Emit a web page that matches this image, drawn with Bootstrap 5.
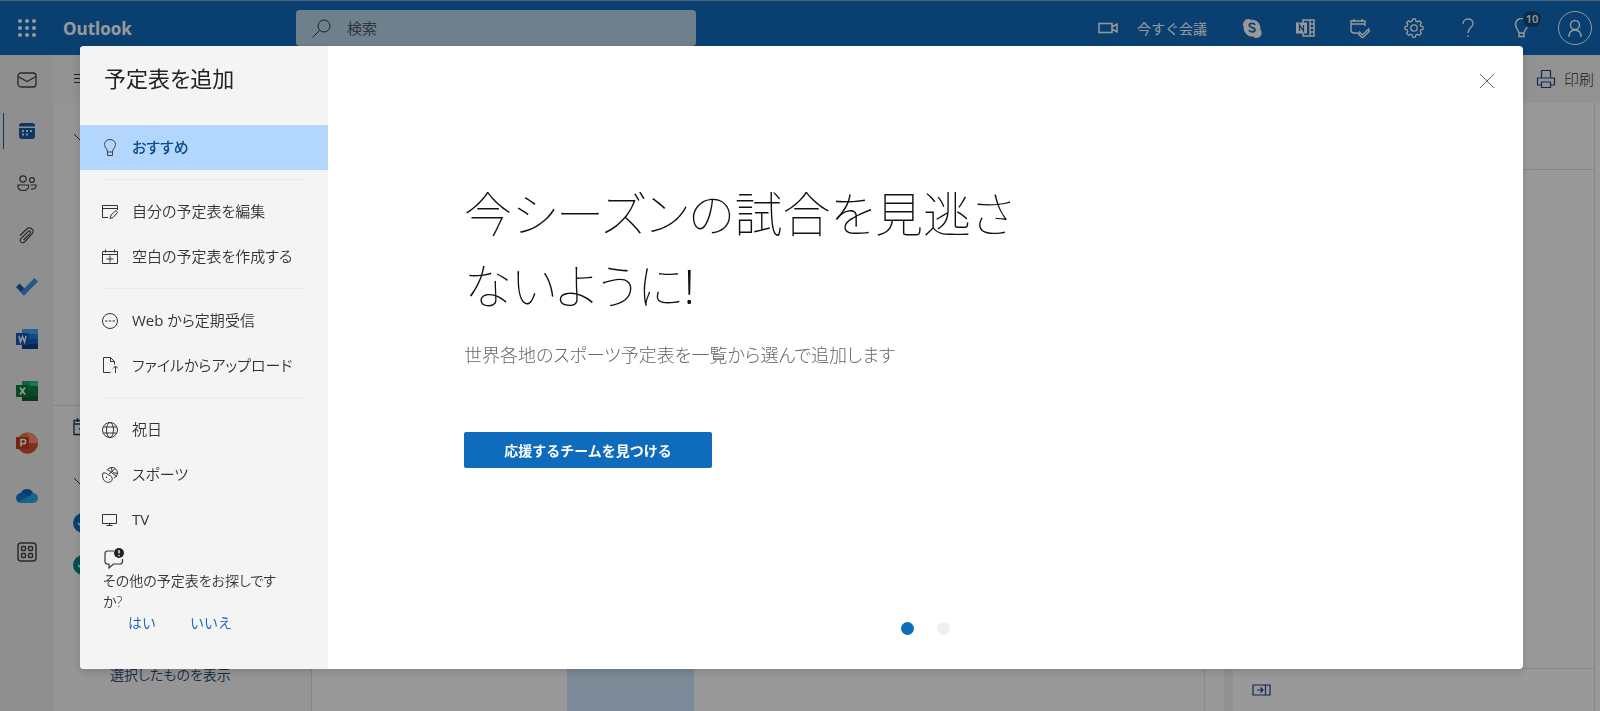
<!DOCTYPE html>
<html lang="ja">
<head>
<meta charset="utf-8">
<meta name="viewport" content="width=device-width, initial-scale=1">
<title>Outlook - 予定表を追加</title>
<link rel="stylesheet" href="https://cdn.jsdelivr.net/npm/bootstrap@5.3.0/dist/css/bootstrap.min.css">
<style>
  body { font-family: "Open Sans", "Noto Sans CJK JP", sans-serif; font-feature-settings: "palt"; font-size: 15px; line-height: 21px; color: #333; background: #f3f3f3; }
  svg { display: block; fill: none; stroke: currentColor; stroke-width: 1; flex-shrink: 0; }
  .btn { --bs-btn-border-width: 0; --bs-btn-padding-x: 0; --bs-btn-padding-y: 0; --bs-btn-border-radius: 0; --bs-btn-font-size: 15px; --bs-btn-line-height: 21px; }

  .suite-bar { height: 55px; background: #0f6cbd; border-top: 1px solid #78a5cb; color: #fff; }
  .suite-bar .btn, .suite-bar a { color: #fff; }
  .waffle { width: 53px; }
  .brand-area { width: 296px; }
  .brand-name { font-size: 17px; font-weight: 700; margin-left: 10px; }
  .search-box { width: 400px; height: 36px; background: #b9d5eb; border-radius: 4px; color: #333; }
  .search-box input { font-size: 15px; }
  .search-box input::placeholder { color: #4c5a66; opacity: 1; }
  .bar-btn { width: 54px; height: 54px; }
  .meet-btn { --bs-btn-font-size: 14px; margin-right: 18px; gap: 19px; }
  .tips-count { left: 28px; top: 10px; width: 18px; height: 16px; border-radius: 8px; background: #15497a; font-size: 11px; font-weight: 600; line-height: 16px; }
  .avatar { width: 51px; }
  .avatar span { width: 34px; height: 34px; border: 1px solid #fff; }

  .app-rail { width: 53px; background: #eee; color: #444; }
  .app-rail a { height: 52px; width: 53px; color: inherit; }
  .app-rail a:first-child { height: 50px; }
  .app-rail a.current { color: #0f5cab; }
  .current::before { content: ""; position: absolute; left: 3px; top: 8px; width: 1px; height: 36px; background: #0f5cab; }
  .app-rail a.more-apps { height: 62px; }

  .command-bar { height: 48px; padding: 0 6px 0 20px; }
  .command-bar .btn { color: #333; font-weight: 300; }
  .folder-pane { width: 259px; background: #f8f8f8; border-right: 1px solid #e2e2e2; }
  .pane-row { height: 42px; padding-left: 20px; }
  .mini-month { height: 303px; border-bottom: 1px solid #ddd; padding-top: 13px; }
  .pane-gap { margin-top: 12px; }
  .pane-link { margin-top: 78px; padding-left: 57px; font-size: 14px; font-weight: 350; }
  .pane-link a { color: #2b4a70; }
  .surface { background: #fff; }
  .days { display: grid; grid-template-columns: repeat(7, 1fr); border-right: 1px solid #e5e5e5; margin-right: 19px; }
  .today { background: #cde6fb; }
  .agenda { width: 371px; border-left: 9px solid #f2f2f2; border-right: 1px solid #e2e2e2; margin-right: 5px; }
  .agenda-head { height: 67px; border-bottom: 1px solid #e2e2e2; }
  .agenda-body { border-bottom: 1px solid #e2e2e2; }
  .agenda-foot { height: 42px; padding-left: 19px; color: #1b3f8b; }

  .veil { background: rgba(0, 0, 0, .4); }
  .veil .modal-dialog { max-width: none; margin: 46px 77px 42px 80px; }
  .veil .modal-content { min-height: calc(100vh - 88px); border: 0; border-radius: 4px; overflow: hidden; color: #333; box-shadow: 0 3px 8px rgba(0, 0, 0, .15); }
  .side { width: 248px; background: #f4f4f4; padding-bottom: 34px; font-weight: 350; }
  .side h1 { font-size: 22px; line-height: 32px; font-weight: 400; color: #222; margin: 16px 24px 31px; }
  .side-link { height: 45px; padding-left: 22px; gap: 14px; color: #333; }
  .side-link.chosen { background: #b3d6fc; color: #0f4a8a; font-weight: 500; }
  .side-link.chosen svg { color: #444; }
  .side hr { margin: 9px 23px; border-color: #d0d0d0; }
  .ask { padding: 6px 23px 0; font-size: 14px; }
  .ask-text { max-width: 184px; }
  .ask .btn { --bs-btn-font-size: 14px; color: #1160b7; font-weight: 350; }
  .ask-answers { padding-left: 25px; gap: 34px; }
  .promo { padding: 132px 0 0 136px; }
  .promo h2 { font-size: 48px; line-height: 72px; font-weight: 100; color: #111; max-width: 570px; margin: 0; }
  .promo p { font-size: 18px; line-height: 26px; font-weight: 300; color: #666; margin: 20px 0 64px; }
  .cta.btn { --bs-btn-font-size: 14px; width: 248px; height: 36px; border-radius: 2px; background: #0f6cbd; color: #fff; font-weight: 700; }
  .close-btn { right: 28px; top: 27px; color: #666; }
  .dots { gap: 23px; margin-bottom: 34px; }
  .dots .btn { width: 13px; height: 13px; border-radius: 50%; background: #f0f0f0; }
  .dots .btn.active { background: #0f6cbd; }
</style>
</head>
<body class="vh-100 d-flex flex-column overflow-hidden">

<header class="suite-bar d-flex align-items-center flex-shrink-0">
  <div class="brand-area d-flex align-items-center">
    <button class="btn waffle d-flex justify-content-center" aria-label="アプリ起動ツール">
      <svg width="20" height="20" viewBox="0 0 20 20" style="fill:currentColor;stroke:none"><circle cx="3" cy="3" r="2"/><circle cx="10" cy="3" r="2"/><circle cx="17" cy="3" r="2"/><circle cx="3" cy="10" r="2"/><circle cx="10" cy="10" r="2"/><circle cx="17" cy="10" r="2"/><circle cx="3" cy="17" r="2"/><circle cx="10" cy="17" r="2"/><circle cx="17" cy="17" r="2"/></svg>
    </button>
    <a href="#" class="brand-name text-decoration-none">Outlook</a>
  </div>
  <label class="search-box d-flex align-items-center ps-3">
    <svg width="19" height="19" viewBox="0 0 19 19"><circle cx="12" cy="7" r="6"/><path d="M7.700 11.300L.7 18.300"/></svg>
    <input type="text" class="form-control border-0 bg-transparent shadow-none p-0 ms-3" placeholder="検索" aria-label="検索">
  </label>
  <nav class="ms-auto d-flex align-items-center">
    <button class="btn meet-btn d-flex align-items-center">
      <svg width="20" height="12" viewBox="0 0 20 12" style="stroke-width:1.500"><path d="M1 1.500h13v9H1zM14 5l5-3v8l-5-3"/></svg>
      今すぐ会議
    </button>
    <button class="btn bar-btn d-flex align-items-center justify-content-center" aria-label="Skype">
      <svg width="20" height="20" viewBox="0 0 20 20"><path style="fill:currentColor;stroke:none" d="M6 1a5 5 0 0 1 3 .7 8.500 8.500 0 0 1 9.300 9.800A5 5 0 0 1 11 18.400 8.500 8.500 0 0 1 1.700 9 5.500 5.500 0 0 1 6 1z"/><path style="stroke:#0f6cbd;stroke-width:1.800" d="M13 7C12.300 5 7.500 4.800 7.300 7.300c0 2.700 5.700 1.800 5.700 4.500 0 2.700-5 2.600-6 .2"/></svg>
    </button>
    <button class="btn bar-btn d-flex align-items-center justify-content-center" aria-label="OneNote">
      <svg width="20" height="20" viewBox="0 0 20 20"><path style="stroke-width:1.500" d="M7 5V2h11v16H7v-3M14 2v16M14 6h4M14 10h4M14 14h4"/><path style="fill:currentColor;stroke:none" d="M0 4.500h11v11H0z"/><path style="stroke:#0f6cbd;stroke-width:1.300" d="M3.500 13V7l4 6V7"/></svg>
    </button>
    <button class="btn bar-btn d-flex align-items-center justify-content-center" aria-label="マイ デイ">
      <svg width="20" height="20" viewBox="0 0 20 20" style="stroke-width:1.400"><path d="M8 15H4a3 3 0 0 1-3-3V3h14v5M1 6h14M4 1v3M12 1v3M9.500 14l3 3 6-6 1 2-7 7-4-4z"/></svg>
    </button>
    <button class="btn bar-btn d-flex align-items-center justify-content-center" aria-label="設定">
      <svg width="20" height="20" viewBox="0 0 20 20" style="stroke-width:1.300;stroke-linejoin:round"><circle cx="10" cy="10" r="3.200"/><path d="M8.600 1h2.800l.5 2.200 1.600.7 1.900-1.200 2 2-1.200 1.900.6 1.600 2.200.5v2.700l-2.200.5-.6 1.600 1.200 1.900-2 2-1.900-1.200-1.600.7-.5 2.200H8.600l-.5-2.200-1.600-.7-1.900 1.200-2-2 1.200-1.900-.6-1.600L1 11.400V8.700l2.200-.5.6-1.600-1.200-1.900 2-2 1.900 1.200 1.600-.7z"/></svg>
    </button>
    <button class="btn bar-btn d-flex align-items-center justify-content-center" aria-label="ヘルプ">
      <svg width="12" height="20" viewBox="0 0 12 20" style="stroke-width:1.300"><path d="M1 6c0-3 2-5 5-5s5 2 5 4.500C11 9.500 6 9.500 6 15M6 17.300v1.700"/></svg>
    </button>
    <button class="btn bar-btn d-flex align-items-center justify-content-center position-relative" aria-label="ヒント">
      <svg width="16" height="20" viewBox="0 0 16 20" style="stroke-width:1.400"><path d="M10 1a6 6 0 0 0-8.500 5.500c0 3.500 2.500 4.500 3.500 8.500h5c.6-3 2.500-4.300 3.200-6M5 15v3.500h5V15"/></svg>
      <span class="tips-count position-absolute">10</span>
    </button>
    <a href="#" class="avatar d-flex justify-content-center" aria-label="アカウント">
      <span class="rounded-circle d-flex align-items-center justify-content-center">
        <svg width="16" height="18" viewBox="0 0 16 18" style="stroke-width:1.400"><circle cx="8" cy="6" r="4.500"/><path d="M2 18c0-5 2.500-7 6-7s6 2 6 7"/></svg>
      </span>
    </a>
  </nav>
</header>

<div class="d-flex flex-grow-1">
  <nav class="app-rail flex-shrink-0" aria-label="アプリ">
    <a href="#" class="d-flex align-items-center justify-content-center" aria-label="メール"><svg width="20" height="16" viewBox="0 0 20 16" style="stroke-width:1.300"><rect x="1" y="1" width="18" height="14" rx="3"/><path d="M1 4.500l9 5 9-5"/></svg></a>
    <a href="#" class="current position-relative d-flex align-items-center justify-content-center" aria-label="予定表"><svg width="16" height="16" viewBox="0 0 16 16" style="stroke:none"><path fill="currentColor" d="M3 0h10a3 3 0 0 1 3 3v.5H0V3a3 3 0 0 1 3-3zM0 5h16v8a3 3 0 0 1-3 3H3a3 3 0 0 1-3-3z"/><path fill="#eee" d="M3 10.500h2v2H3zM7 7h2v2H7zM11 7h2v2h-2zM7 10.500h2v2H7zM3 7h2v2H3z"/></svg></a>
    <a href="#" class="d-flex align-items-center justify-content-center" aria-label="連絡先"><svg width="20" height="16" viewBox="0 0 20 16" style="stroke-width:1.200"><circle cx="6" cy="4" r="3.200"/><circle cx="15" cy="5" r="2.400"/><path d="M1 10h10.500v1.500c0 2.500-2.500 4-5.300 4S1 14 1 11.500zM13.500 10H19v1c0 2-2 3.500-5 3"/></svg></a>
    <a href="#" class="d-flex align-items-center justify-content-center" aria-label="ファイル"><svg width="16" height="17" viewBox="0 0 16 17" style="stroke-width:1.100"><path d="M1 8.500L7.700 2c3-2.800 8.300.5 5.800 4.500l-8 8.500c-2.500 2-5.500-.7-3.700-3.200l7.500-7.500c1.500-1 3 .5 2 2L4.500 13"/></svg></a>
    <a href="#" class="d-flex align-items-center justify-content-center" aria-label="To Do"><svg width="22" height="18" viewBox="0 0 22 18" style="stroke:none"><path fill="#1b5cb8" d="M3.500 5.500L0 9l8 8.500 3.500-4z"/><path fill="#3a94e0" d="M18.500 0L22 3.500 8 17.500 4.700 14z"/></svg></a>
    <a href="#" class="d-flex align-items-center justify-content-center" aria-label="Word"><svg width="22" height="20" viewBox="0 0 22 20" style="stroke:none"><path fill="#2b7cd3" d="M6 0h16v10H6z"/><path fill="#41a5ee" d="M6 0h16v5H6z"/><path fill="#103f91" d="M6 10h16v10H6z"/><path fill="#185abd" d="M6 10h16v5H6zM0 4h13v12H0z"/><path style="stroke:#fff;stroke-width:1.400" d="M3 7l1.500 6L6.500 7.500l2 5.500L10 7"/></svg></a>
    <a href="#" class="d-flex align-items-center justify-content-center" aria-label="Excel"><svg width="22" height="20" viewBox="0 0 22 20" style="stroke:none"><path fill="#21a366" d="M6 0h16v10H6z"/><path fill="#33c481" d="M14 0h8v5h-8z"/><path fill="#185c37" d="M6 10h16v10H6z"/><path fill="#107c41" d="M14 5h8v10h-8zM0 4h13v12H0z"/><path style="stroke:#fff;stroke-width:1.600" d="M4 6.500l5 7M9 6.500l-5 7"/></svg></a>
    <a href="#" class="d-flex align-items-center justify-content-center" aria-label="PowerPoint"><svg width="22" height="22" viewBox="0 0 22 22" style="stroke:none"><circle cx="11.500" cy="11" r="10.500" fill="#ed6c47"/><path fill="#ff8f6b" d="M11.500.5A10.500 10.500 0 0 1 22 11H11.500z"/><path fill="#d35230" d="M1 11h21a10.500 10.500 0 0 1-21 0z"/><path fill="#c43e1c" d="M0 5h13v12H0z"/><path style="stroke:#fff;stroke-width:1.600" d="M5 14.500v-7h2.500a2 2 0 0 1 0 4.300H5"/></svg></a>
    <a href="#" class="d-flex align-items-center justify-content-center" aria-label="OneDrive"><svg width="22" height="15" viewBox="0 0 22 15" style="stroke:none"><path fill="#0364b8" d="M5 5a6.500 6.500 0 0 1 12 0l-3 6-9-3z"/><path fill="#0f78d4" d="M5 4.700C7 4.500 9 5 14 9L3 14.500C-1.500 12.500-.8 5.500 5 4.700z"/><path fill="#28a8ea" d="M2.500 14L14 7.500c1-2 3-2.800 4.500-2.200C23.500 6.500 23 15 17.500 15H5c-1 0-2-.4-2.500-1z"/></svg></a>
    <a href="#" class="more-apps d-flex align-items-center justify-content-center" aria-label="その他のアプリ"><svg width="20" height="20" viewBox="0 0 20 20" style="stroke-width:1.500"><rect x="1" y="1" width="18" height="18" rx="3"/><rect x="4.500" y="4.500" width="4" height="4" rx="1"/><rect x="11.500" y="4.500" width="4" height="4" rx="1"/><rect x="4.500" y="11.500" width="4" height="4" rx="1"/><rect x="11.500" y="11.500" width="4" height="4" rx="1"/></svg></a>
  </nav>

  <div class="flex-grow-1 d-flex flex-column">
    <div class="command-bar d-flex align-items-center justify-content-between">
      <button class="btn" aria-label="ナビゲーション"><svg width="18" height="12" viewBox="0 0 18 12"><path d="M1 1.500h17M1 5.500h17M1 9.500h17"/></svg></button>
      <button class="btn d-flex align-items-center gap-2">
        <svg width="20" height="20" viewBox="0 0 20 20" style="color:#1b4a86;stroke-width:1.200"><path d="M5.500 9V1.500h9V9M5.500 16H1.500V9h17v7h-4M5.500 13h9v5.500h-9z"/></svg>
        印刷
      </button>
    </div>
    <div class="d-flex flex-grow-1">
      <aside class="folder-pane flex-shrink-0">
        <div class="mini-month">
          <div class="pane-row d-flex align-items-center"><svg width="14" height="8" viewBox="0 0 14 8"><path d="M1 1l6 6 6-6"/></svg></div>
        </div>
        <div class="pane-row d-flex align-items-center"><svg width="18" height="18" viewBox="0 0 18 18" style="color:#1b3558;stroke-width:1.300"><path d="M1 2.500h16v14H1zM1 6h16M4.500 0v4M13.500 0v4M6 11h6M9 8v6"/></svg></div>
        <div class="pane-gap pane-row d-flex align-items-center"><svg width="14" height="8" viewBox="0 0 14 8"><path d="M1 1l6 6 6-6"/></svg></div>
        <div class="pane-row d-flex align-items-center"><svg width="20" height="20" viewBox="0 0 20 20"><circle cx="10" cy="10" r="10" style="fill:#0f6cbd;stroke:none"/><path style="stroke:#fff;stroke-width:1.500" d="M5 10l4 4 7-8"/></svg></div>
        <div class="pane-row d-flex align-items-center"><svg width="20" height="20" viewBox="0 0 20 20"><circle cx="10" cy="10" r="10" style="fill:#038387;stroke:none"/><path style="stroke:#fff;stroke-width:1.500" d="M5 10l4 4 7-8"/></svg></div>
        <div class="pane-link"><a href="#" class="text-decoration-none">選択したものを表示</a></div>
      </aside>
      <main class="surface flex-grow-1 d-flex">
        <div class="days flex-grow-1"><div></div><div></div><div class="today"></div><div></div><div></div><div></div><div></div></div>
        <section class="agenda d-flex flex-column">
          <div class="agenda-head"></div>
          <div class="agenda-body flex-grow-1"></div>
          <div class="agenda-foot d-flex align-items-center"><svg width="19" height="12" viewBox="0 0 19 12" style="stroke-width:1.200"><path d="M1 1h17v10H1zM13.500 1v10M5 6h6M8.500 3.500L11 6 8.500 8.500"/></svg></div>
        </section>
      </main>
    </div>
  </div>
</div>

<div class="modal veil d-block" role="dialog" aria-modal="true" aria-labelledby="dlgTitle">
  <div class="modal-dialog">
    <div class="modal-content flex-row">
      <nav class="side flex-shrink-0">
        <h1 id="dlgTitle">予定表を追加</h1>
        <a href="#" class="side-link chosen d-flex align-items-center text-decoration-none"><svg width="16" height="18" viewBox="0 0 16 18"><path d="M5.500 13c0-3-3-4.500-3-7.500a5.500 5 0 0 1 11 0c0 3-3 4.500-3 7.500zM5.500 13v3.500h5V13"/></svg>おすすめ</a>
        <hr>
        <a href="#" class="side-link d-flex align-items-center text-decoration-none"><svg width="16" height="16" viewBox="0 0 16 16"><path d="M6 13.500H.5v-12h15V6M.5 4.500h15M8 14.500l1-3.500 5-4.500 1.500 2-4.500 5z"/></svg>自分の予定表を編集</a>
        <a href="#" class="side-link d-flex align-items-center text-decoration-none"><svg width="16" height="16" viewBox="0 0 16 16"><path d="M.5 2.500h15v12H.5zM.5 5.500h15M3.500.5v3M12.500.5v3M4.500 10h7M8 6.500v7"/></svg>空白の予定表を作成する</a>
        <hr>
        <a href="#" class="side-link d-flex align-items-center text-decoration-none"><svg width="16" height="16" viewBox="0 0 16 16"><circle cx="8" cy="8" r="7.500"/><path d="M3 8h2.500M6.800 8h2.500M10.500 8H13"/></svg><span><span class="fw-normal">Web</span> から定期受信</span></a>
        <a href="#" class="side-link d-flex align-items-center text-decoration-none"><svg width="16" height="17" viewBox="0 0 16 17"><path d="M8.500 15.500h-7V.5h7l4 4v3M8.500.5v4h4M13.500 16V9M11 11.500L13.500 9l2.500 2.500"/></svg>ファイルからアップロード</a>
        <hr>
        <a href="#" class="side-link d-flex align-items-center text-decoration-none"><svg width="16" height="16" viewBox="0 0 16 16"><circle cx="8" cy="8" r="7.500"/><ellipse cx="8" cy="8" rx="3.500" ry="7.500"/><path d="M1.500 5h13M1.500 11h13"/></svg>祝日</a>
        <a href="#" class="side-link d-flex align-items-center text-decoration-none"><svg width="16" height="16" viewBox="0 0 16 16"><path d="M5 3.500a5.500 5.500 0 1 1 7 7.500M5.500 2.500l9 7M7 7l6-5.500M9.500.7c0 4 2 6 6 5.500M1 6c3-1 4 1.500 6 2s4 2.500 3 5.500c-2 2.500-5.500 2.300-7.500.3S0 8.500 1 6zM4.500 9.500v1.500M7 12.500h.500"/></svg>スポーツ</a>
        <a href="#" class="side-link fw-normal d-flex align-items-center text-decoration-none"><svg width="16" height="16" viewBox="0 0 16 16"><path d="M.5 2.500h14v9H.5zM4.500 13.500h6M7.500 11.500v2"/></svg>TV</a>
        <div class="ask">
          <svg width="22" height="22" viewBox="0 0 22 22" style="stroke-width:1.200"><path d="M11 3H4.500A2.500 2.500 0 0 0 2 5.500v8A2.500 2.500 0 0 0 4.500 16H6v4l4.500-4H17a2.500 2.500 0 0 0 2.500-2.500V11"/><circle cx="16" cy="5" r="5" style="fill:#222;stroke:none"/><path style="stroke:#fff;stroke-width:1.300" d="M16 2v3.500M16 7v1.300"/></svg>
          <div class="ask-text">その他の予定表をお探しですか?</div>
          <div class="ask-answers d-flex">
            <button class="btn">はい</button>
            <button class="btn">いいえ</button>
          </div>
        </div>
      </nav>
      <section class="flex-grow-1 d-flex flex-column position-relative">
        <button class="btn close-btn position-absolute" aria-label="閉じる"><svg width="16" height="16" viewBox="0 0 16 16"><path d="M1 1l14 14M15 1L1 15"/></svg></button>
        <div class="promo">
          <h2>今シーズンの試合を見逃さないように!</h2>
          <p>世界各地のスポーツ予定表を一覧から選んで追加します</p>
          <button class="btn cta">応援するチームを見つける</button>
        </div>
        <div class="dots d-flex justify-content-center mt-auto">
          <button class="btn active" aria-label="スライド 1"></button>
          <button class="btn" aria-label="スライド 2"></button>
        </div>
      </section>
    </div>
  </div>
</div>

<script src="https://cdn.jsdelivr.net/npm/bootstrap@5.3.0/dist/js/bootstrap.bundle.min.js"></script>
</body>
</html>
